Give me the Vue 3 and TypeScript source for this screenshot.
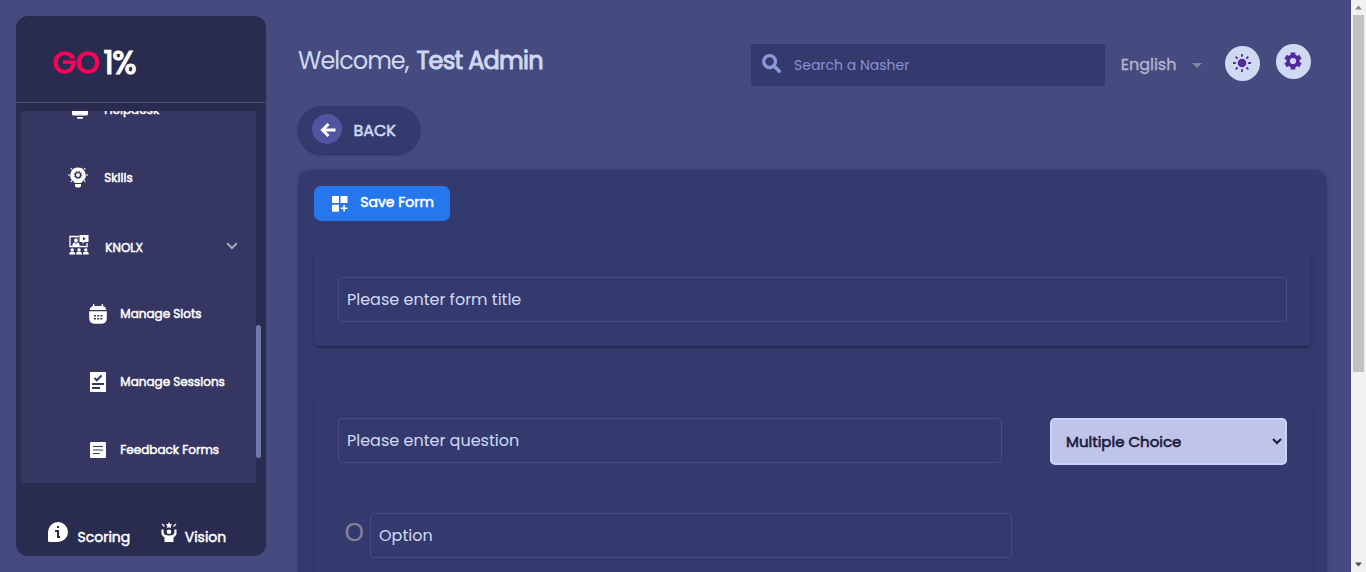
<script setup lang="ts">
import { ref } from 'vue'

interface SubItem {
  label: string
  icon: 'calendar' | 'sessions' | 'forms'
}

const subItems: SubItem[] = [
  { label: 'Manage Slots', icon: 'calendar' },
  { label: 'Manage Sessions', icon: 'sessions' },
  { label: 'Feedback Forms', icon: 'forms' },
]

const search = ref('')
const title = ref('')
const question = ref('')
const option = ref('')
const kind = ref('Multiple Choice')
</script>

<template>
  <div class="screen">
    <aside class="sidebar">
      <div class="logo"><span class="go">GO</span><span class="pct">1%</span></div>
      <div class="menu-wrap">
        <nav class="menu">
          <div class="item helpdesk">
            <svg class="ic" width="20" height="20" viewBox="0 0 20 20" fill="#fff"><path d="M2 0h16v14a1.500 1.500 0 0 1-1.500 1.500h-13A1.500 1.500 0 0 1 2 14zM7 17h6v1.800H7z" /></svg>
            <span>Helpdesk</span>
          </div>
          <div class="item skills">
            <svg class="ic" width="20" height="21" viewBox="0 0 20 21">
              <path d="M10 .5a7.700 7.700 0 0 0-4.400 14c.7.500 1 .9 1.200 1.500h6.400c.2-.6.600-1 1.200-1.500A7.700 7.700 0 0 0 10 .5z" fill="#fff" />
              <path d="M7 17h6v1.700q0 1.800-1.800 1.800H8.800Q7 20.500 7 18.700z" fill="#fff" />
              <path d="M0 8h2M18 8h2M2.700 1.200l1.200 1.200M17.300 1.200l-1.200 1.200M2.700 14.800l1.200-1.200M17.300 14.800l-1.200-1.200" stroke="#fff" stroke-width="1.200" />
              <circle cx="10" cy="8" r="2.600" fill="none" stroke="#353662" stroke-width="1.400" />
              <circle cx="10" cy="8" r="3.700" fill="none" stroke="#353662" stroke-width="1" stroke-dasharray="1.453 1.453" />
            </svg>
            <span>Skills</span>
          </div>
          <div class="item knolx">
            <svg class="ic" width="20" height="20" viewBox="0 0 20 20" fill="#fff">
              <path d="M10 1.500H1v10h17V8" fill="none" stroke="#fff" stroke-width="1.300" />
              <path d="M10.500 0h9v7h-4l-2 2V7h-3z" />
              <path d="M14 2l3 1.700-3 1.700z" fill="#353662" />
              <circle cx="7" cy="5.200" r="1.900" /><path d="M3.500 11V9.500q0-2 2-2h3q2 0 2 2V11z" />
              <path d="M6 8l1 1.200L8 8z" fill="#353662" />
              <circle cx="3.200" cy="14.900" r="1.700" /><circle cx="10" cy="14.900" r="1.700" /><circle cx="16.800" cy="14.900" r="1.700" />
              <path d="M.3 19.500v-1q0-1.800 1.800-1.800h2.200q1.800 0 1.800 1.800v1zM7.100 19.500v-1q0-1.800 1.800-1.800h2.200q1.800 0 1.800 1.800v1zM13.900 19.500v-1q0-1.800 1.800-1.800h2.200q1.800 0 1.800 1.800v1z" />
            </svg>
            <span>KNOLX</span>
            <svg class="chev" width="12" height="8" viewBox="0 0 12 8"><path d="M1.200 1.200L6 6l4.800-4.800" fill="none" stroke="#a5a7bd" stroke-width="2" /></svg>
          </div>
          <div v-for="s in subItems" :key="s.label" class="item sub">
            <svg v-if="s.icon === 'calendar'" class="ic" width="18" height="20" viewBox="0 0 18 20">
              <path d="M4 0h1.300v2h7.400V0H14v2q2.600.6 3.300 4H.7Q1.400 2.600 4 2zM.2 7.200h17.600V14q0 5.700-5 5.700H5.200q-5 0-5-5.700z" fill="#fff" />
              <path d="M5 11h2v1.500H5zM8.200 11h2v1.500h-2zM11.400 11h2v1.500h-2zM5 14h2v1.500H5zM8.200 14h2v1.500h-2zM11.400 14h2v1.500h-2z" fill="#353662" />
            </svg>
            <svg v-else-if="s.icon === 'sessions'" class="ic" width="18" height="20" viewBox="0 0 18 20">
              <path d="M1 .5q0-.5.500-.5h15q.5 0 .5.500v19q0 .5-.5.500h-15q-.5 0-.5-.5z" fill="#fff" />
              <path d="M5.500 6l2.300 2.300L12.600 3.500M3 12h12M3 15.900h8" fill="none" stroke="#353662" stroke-width="2" />
            </svg>
            <svg v-else class="ic" width="18" height="20" viewBox="0 0 18 20">
              <rect x="1" y="2" width="16" height="16" rx="1" fill="#fff" />
              <path d="M4 6.500h10M4 10h10M4 13.500h6.500" stroke="#353662" stroke-width="1.200" />
            </svg>
            <span>{{ s.label }}</span>
          </div>
        </nav>
        <div class="menu-track"><div class="menu-thumb"></div></div>
      </div>
      <footer class="foot">
        <svg width="20" height="20" viewBox="0 0 20 20"><path d="M10 0a10 10 0 1 1 0 20H1.500Q0 20 0 18.500V10A10 10 0 0 1 10 0z" fill="#fff" /><path d="M9 4h2v2H9zM7 8h4v6h1v2H9v-6H7z" fill="#2a2c4f" /></svg>
        <span class="scoring">Scoring</span>
        <svg class="vis" width="16" height="20" viewBox="0 0 16 20" fill="#fff">
          <path d="M8 0l1 2.100 2.300.3-1.700 1.600.4 2.300-2-1.100-2 1.100.4-2.300-1.700-1.600L7 2.100z" />
          <path d="M1 2l2.500 2.500M15 2l-2.500 2.500" stroke="#fff" stroke-width="1.200" />
          <circle cx="8" cy="9.800" r="2.300" />
          <path d="M.5 7.500H2.600V11Q3.500 13.500 8 13.500T13.400 11V7.500H15.500V12Q14.500 14.500 12.500 15.500V20h-9V15.500Q1.500 14.500.5 12z" />
        </svg>
        <span class="vision">Vision</span>
      </footer>
    </aside>

    <main class="main">
      <header class="top">
        <h1 class="hello"><span class="w">Welcome,</span><b>Test Admin</b></h1>
        <label class="search">
          <svg width="20" height="20" viewBox="0 0 20 20" fill="none" stroke="#8c98dc"><circle cx="7.600" cy="7.600" r="5.900" stroke-width="3.300" /><path d="M12 12l6.300 6.300" stroke-width="3.500" /></svg>
          <input v-model="search" placeholder="Search a Nasher" />
        </label>
        <span class="lang">English</span>
        <svg class="caret" width="10" height="5" viewBox="0 0 10 5"><path d="M0 0h10L5 5z" fill="#8886a4" /></svg>
        <button class="round sun" aria-label="Theme">
          <svg width="18" height="18" viewBox="0 0 18 18"><circle cx="9" cy="9" r="4.300" fill="#552a9c" /><path d="M9 0v2.700M9 15.300V18M0 9h2.800M15.200 9H18M2.700 2.700l1.900 1.900M13.400 13.400l1.900 1.900M2.700 15.300l1.900-1.900M13.400 4.600l1.900-1.900" stroke="#552a9c" stroke-width="1.800" /></svg>
        </button>
        <button class="round gear" aria-label="Settings">
          <svg width="18" height="18" viewBox="0 0 18 18" fill="none" stroke="#552a9c"><circle cx="9" cy="9" r="4.900" stroke-width="3.600" /><path d="M9 .4v3M9 14.600v3M1.550 4.700l2.600 1.500M13.850 11.800l2.600 1.500M1.550 13.300l2.600-1.500M13.850 6.200l2.600-1.500" stroke-width="4.600" /></svg>
        </button>
      </header>

      <button class="back">
        <span class="disc"><svg width="16" height="14" viewBox="0 0 16 14" fill="none" stroke="#fff" stroke-width="2.900"><path d="M15.500 7H2.500M8.500 .9L2.400 7l6.100 6.100" /></svg></span>
        <span class="back-t">BACK</span>
      </button>

      <section class="panel">
        <button class="save">
          <svg width="16" height="16" viewBox="0 0 16 16" fill="#fff"><rect width="7" height="7" rx=".6" /><rect x="8.500" width="7" height="7" rx=".6" /><rect y="8.700" width="7" height="7" rx=".6" /><path d="M11.300 9h1.600v2.500h2.600v1.600h-2.600v2.500h-1.600v-2.500H8.700v-1.600h2.600z" /></svg>
          <span>Save Form</span>
        </button>
        <div class="card first"><input v-model="title" class="field ti" placeholder="Please enter form title" /></div>
        <div class="card second">
          <div class="row">
            <input v-model="question" class="field qu" placeholder="Please enter question" />
            <select v-model="kind" class="kind"><option>Multiple Choice</option><option>Text</option></select>
          </div>
          <div class="opt"><span class="o">O</span><input v-model="option" class="field op" placeholder="Option" /></div>
        </div>
      </section>
    </main>

    <div class="scroll">
      <svg width="15" height="15" viewBox="0 0 15 15"><path d="M7.500 5.500L11 9.500H4z" fill="#8a8a8a" /></svg>
      <div class="thumb"></div>
      <svg width="15" height="15" viewBox="0 0 15 15"><path d="M4 5.500h7L7.500 9.500z" fill="#505050" /></svg>
    </div>
  </div>
</template>

<style>
html, body { margin: 0; overflow: hidden; }
</style>

<style scoped>
.screen, .screen * { box-sizing: border-box; }
.screen { display: flex; width: 1366px; height: 572px; overflow: hidden; background: #454a7f; font-family: Poppins, Inter, "Open Sans", sans-serif; color: #cfd9f2; }
button, input, select { font: inherit; border: 0; outline: 0; margin: 0; padding: 0; }
svg { display: block; flex: none; }
span { white-space: nowrap; }
.sidebar { flex: none; width: 250px; height: 540px; margin: 16px 0 0 16px; background: #2a2c4f; border-radius: 12px; display: flex; flex-direction: column; color: #fff; }
.logo { height: 87px; border-bottom: 1px solid #4a4c6c; padding: 27px 0 0 36.5px; display: flex; line-height: 40px; font-size: 30px; font-weight: 400; -webkit-text-stroke: .04em; }
.go { color: #ff0059; width: 51px; letter-spacing: -.2px; }
.pct { letter-spacing: -1.5px; font-size: 32px; }
.menu-wrap { display: flex; margin: 8px 5px 0; height: 372px; }
.menu { width: 235px; height: 372px; overflow: hidden; background: #353662; }
.menu-track { width: 5px; padding-top: 214px; }
.menu-thumb { height: 133px; background: #7078a8; border-radius: 3px; }
.item { display: flex; align-items: center; height: 68px; padding-left: 47px; font-size: 12px; font-weight: 400; line-height: 20px; -webkit-text-stroke: .04em; }
.item .ic { margin-right: 16.3px; }
.helpdesk { height: 34px; margin-top: -2px; align-items: flex-start; }
.helpdesk .ic { margin: -9px 14.3px 0 2px; }
.helpdesk span { margin-top: -9px; }
.skills span { margin-top: 2px; }
.knolx { height: 70px; padding-left: 48px; }
.knolx .ic { margin-top: -2px; }
.knolx span { margin-top: 3px; }
.chev { margin-left: 83px; }
.sub { padding-left: 68px; position: relative; top: -1px; }
.sub .ic { margin-right: 13.3px; }
.foot { display: flex; margin-top: 39px; padding-left: 32px; font-size: 14px; font-weight: 400; line-height: 20px; -webkit-text-stroke: .035em; }
.foot span { margin-top: 5px; }
.scoring { margin-left: 9.5px; width: 83.5px; }
.vision { margin-left: 7.7px; }
.main { flex: 1; min-width: 0; padding: 44px 24px 0 32px; display: flex; flex-direction: column; }
.top { display: flex; height: 42px; flex: none; }
.hello { margin: 0; width: 453px; font-size: 24px; line-height: 34px; font-weight: 400; display: flex; flex: none; }
.w { width: 118.4px; letter-spacing: -1px; }
.hello b { font-weight: 400; letter-spacing: -.75px; -webkit-text-stroke: .04em; }
.search { width: 354px; height: 42px; flex: none; background: #353a6e; display: flex; padding: 10px 0 0 11px; }
.search input { background: transparent; margin-left: 12px; width: 280px; height: 22px; font-size: 14px; }
.search input::placeholder { color: #8791d3; opacity: 1; }
.lang { margin: 9px 0 0 15.7px; width: 70.3px; font-size: 16px; line-height: 23px; font-weight: 400; -webkit-text-stroke: .02em; color: #b4b6cd; }
.caret { margin-top: 19px; margin-left: 1px; margin-right: -1px; }
.round { flex: none; width: 35px; height: 35px; border-radius: 50%; background: #cfd9f2; display: flex; align-items: center; justify-content: center; padding: 0 1px 1px 0; }
.sun { margin: 2px 0 0 24px; }
.gear { margin-left: 16px; }
.back { flex: none; width: 122px; height: 48px; border-radius: 24px; margin-top: 20px; background: #353a6e; color: #cfd9f2; display: flex; padding: 8px 0 0 14px; box-shadow: 0 1px 2px rgba(20, 20, 45, .5); }
.disc { width: 30px; height: 30px; border-radius: 50%; background: #4f559f; display: flex; align-items: center; justify-content: center; padding: 1px 0 0 1px; }
.back-t { font-size: 16px; font-weight: 400; line-height: 33px; margin-left: 11.4px; -webkit-text-stroke: .035em; }
.panel { flex: none; width: 1029px; height: 500px; margin-top: 16px; padding: 16px; background: #353a6e; border-radius: 12px; box-shadow: 0 0 4px rgba(35, 35, 75, .25); }
.save { width: 136px; height: 35px; border-radius: 7px; background: #2676ee; color: #fff; display: flex; padding: 10px 0 0 18px; font-size: 14px; font-weight: 400; }
.save span { margin: -4px 0 0 12.3px; line-height: 20px; -webkit-text-stroke: .04em; }
.card { border-radius: 6px; padding: 24px; width: 997px; }
.first { margin-top: 32px; height: 93px; box-shadow: 0 2px 2px -1px rgba(20, 20, 35, .65), 0 1px 4px rgba(20, 20, 45, .25); background: #353a6e; }
.second { margin-top: 48px; height: 300px; box-shadow: 0 1px 4px rgba(20, 20, 45, .25); background: #353a6e; }
.field { display: block; height: 45px; border: 1px solid #474c80; border-radius: 4px; background: transparent; padding: 0 8px; font-size: 16px; width: 949px; }
.field::placeholder { color: #cfd9f2; opacity: 1; }
.row { display: flex; justify-content: space-between; }
.qu { width: 664px; }
.kind { width: 237px; height: 47px; background: #bfc5e8; border: 2px solid #cbd2fb; border-radius: 5px; color: #1d1b3a; font-size: 15px; font-weight: 400; -webkit-text-stroke: .04em; padding-left: 10px; }
.opt { display: flex; margin-top: 48px; padding-left: 6.4px; }
.o { width: 25.6px; font-family: "Liberation Sans", sans-serif; font-size: 25px; line-height: 38px; color: #858299; }
.op { width: 642px; }
.scroll { flex: none; width: 15px; height: 572px; background: #f1f1f1; display: flex; flex-direction: column; }
.thumb { height: 357px; margin: 0 2px 185px; background: #c1c1c1; }
</style>
